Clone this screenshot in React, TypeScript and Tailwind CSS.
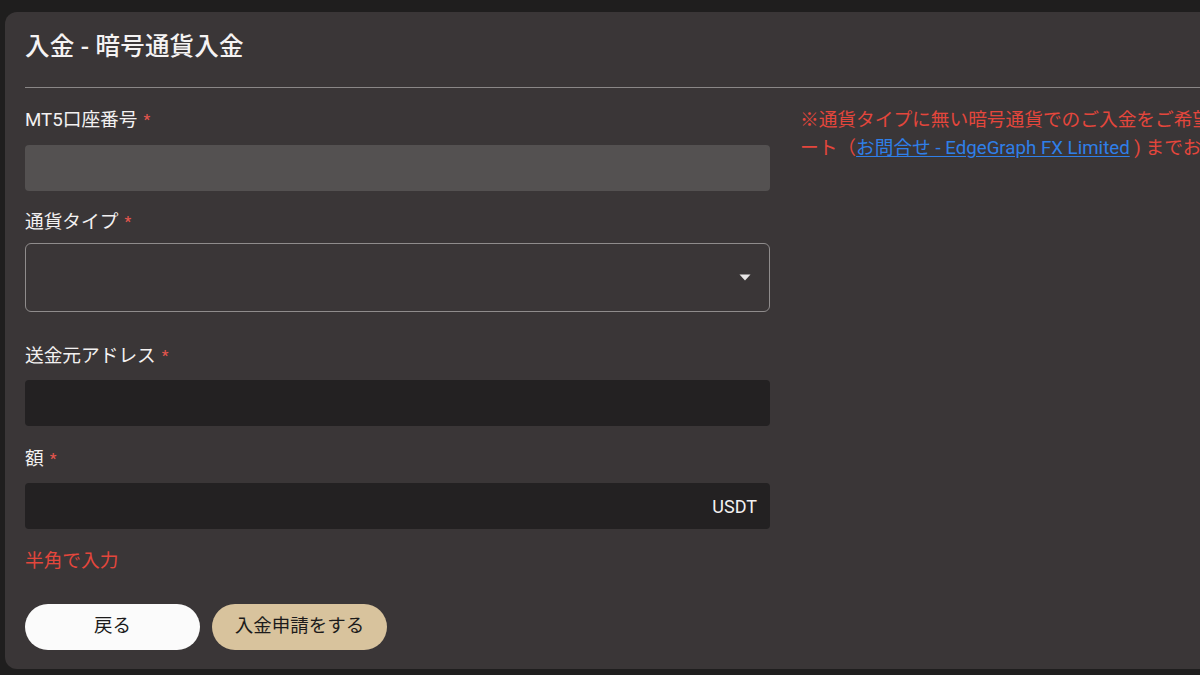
const FONT = "font-['Roboto','Noto_Sans_CJK_JP',sans-serif]"

// ── Field ─────────────────────────────────────────────────────────────────────

function FieldLabel({ children }: { children: React.ReactNode }) {
  return (
    <div className="flex items-center h-[24px] text-[18.7px] leading-[24px] text-[#f3f1f1]">
      <span>{children}</span>
      <span className="ml-[6px] text-[15px] font-medium text-[#e2554d]">*</span>
    </div>
  )
}

// ── App ───────────────────────────────────────────────────────────────────────

export default function App() {
  return (
    <div className={`w-[1200px] h-[675px] overflow-hidden bg-[#1f1e1e] pt-[12px] pl-[5px] ${FONT}`}>
      <div className="h-[657px] w-[1210px] rounded-tl-[12px] rounded-bl-[12px] bg-[#3a3637] pl-[20px] overflow-hidden">
        {/* Header */}
        <div className="h-[76px] flex items-center border-b border-[#8a8787]">
          <h1 className="text-[24.5px] font-medium text-[#f5f3f3] tracking-[0.2px] pb-[4px]">入金 - 暗号通貨入金</h1>
        </div>

        <div className="flex gap-[30px] pt-[20px]">
          {/* Form */}
          <div className="w-[745px] shrink-0">
            <FieldLabel>MT5口座番号</FieldLabel>
            <div className="mt-[13px] h-[46px] rounded-[4px] bg-[#545151]" />

            <div className="mt-[19px]">
              <FieldLabel>通貨タイプ</FieldLabel>
            </div>
            <div className="mt-[9px] h-[69px] rounded-[6px] border border-[#8f8c8c] flex items-center justify-end pr-[18px]">
              <svg width="12" height="7" viewBox="0 0 12 7">
                <path d="M0.5 0.5 L11.5 0.5 L6 6.5 Z" fill="#e8e6e6" />
              </svg>
            </div>

            <div className="mt-[32px]">
              <FieldLabel>送金元アドレス</FieldLabel>
            </div>
            <div className="mt-[12px] h-[46px] rounded-[4px] bg-[#232122]" />

            <div className="mt-[21px]">
              <FieldLabel>額</FieldLabel>
            </div>
            <div className="mt-[12px] h-[46px] rounded-[4px] bg-[#232122] flex items-center justify-end pr-[13px]">
              <span className="text-[18px] text-[#f3f1f1]">USDT</span>
            </div>

            <p className="mt-[20px] text-[18.7px] leading-[24px] text-[#e4463c]">半角で入力</p>

            <div className="mt-[31px] flex gap-[12px]">
              <button className="w-[175px] h-[46px] rounded-full bg-[#fbfbfb] text-[18.5px] text-[#1c1b1b]">戻る</button>
              <button className="w-[175px] h-[46px] rounded-full bg-[#d8c39d] text-[18.5px] text-[#1c1b1b]">入金申請をする</button>
            </div>
          </div>

          {/* Notice */}
          <div className="flex-1 min-w-0 text-[18.7px] leading-[28px] text-[#e4463c] whitespace-nowrap -mt-[2px]">
            <p>※通貨タイプに無い暗号通貨でのご入金をご希望の場合は、サポ</p>
            <p>
              ート（<a className="text-[#2f7fe8] underline underline-offset-2">お問合せ - EdgeGraph FX Limited</a> ) までお問い合わせください。
            </p>
          </div>
        </div>
      </div>
    </div>
  )
}
